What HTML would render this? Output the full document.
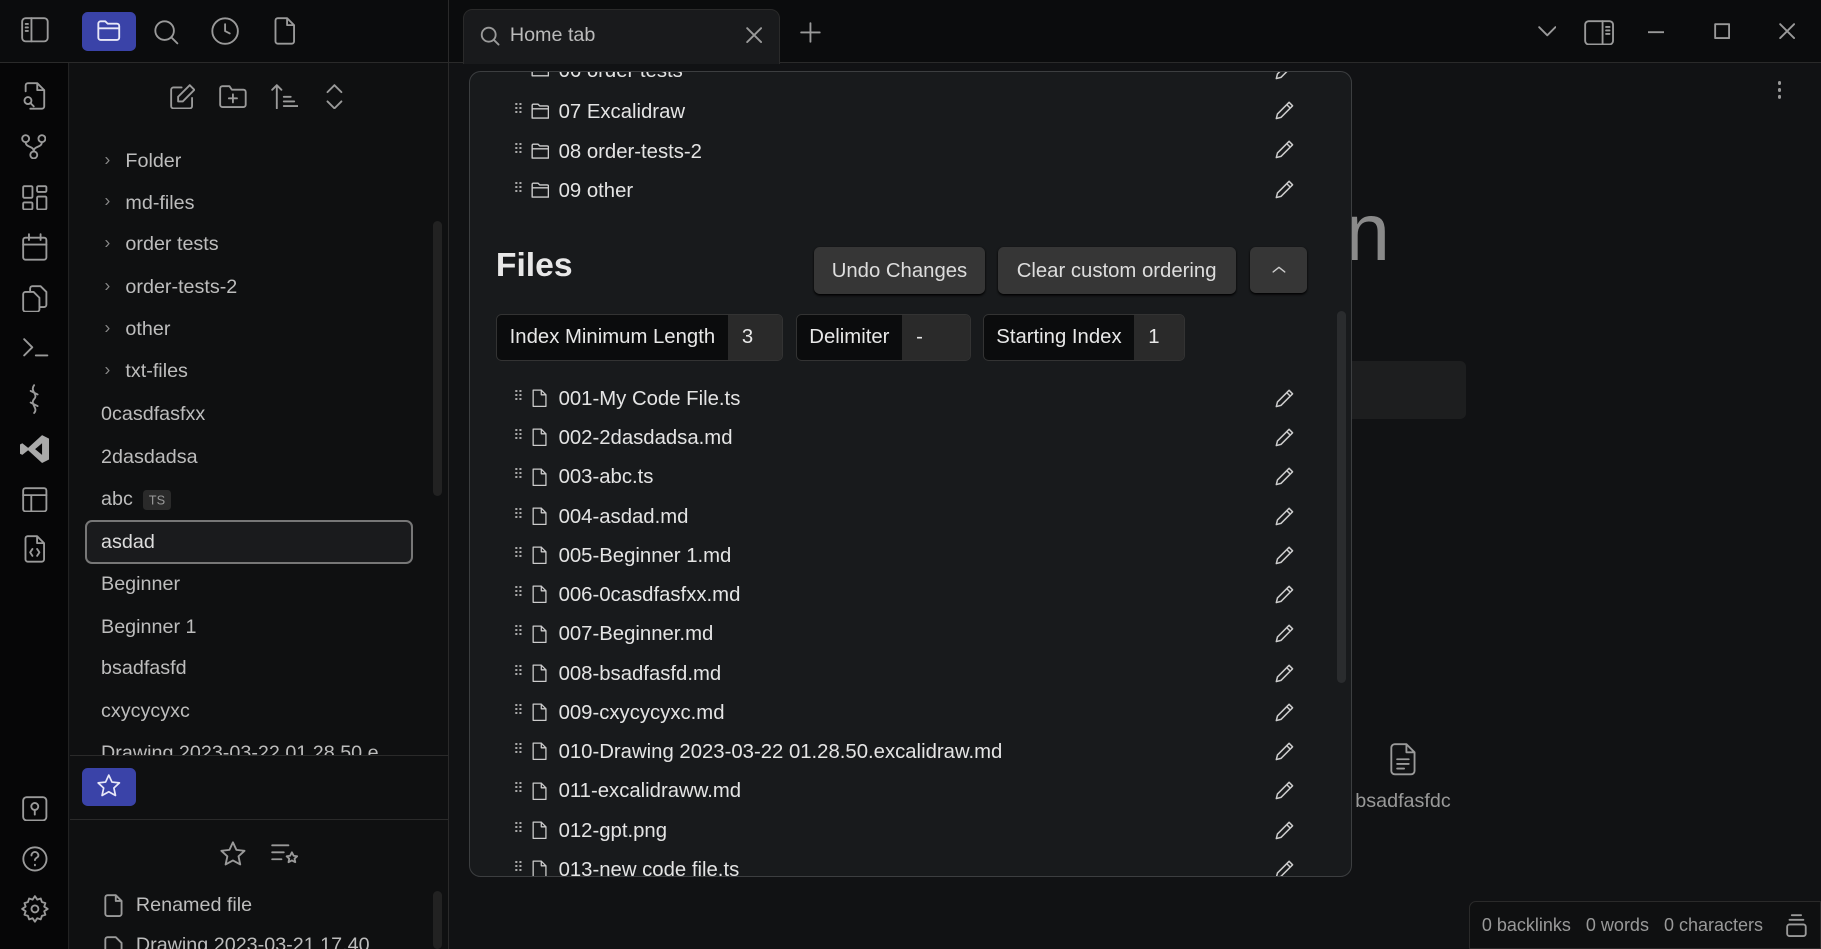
<!DOCTYPE html>
<html><head><meta charset="utf-8"><style>
*{box-sizing:border-box;margin:0;padding:0}
html,body{width:1821px;height:949px;overflow:hidden;background:#111214}
#w{zoom:1.16135;width:1568px;height:817px;position:relative;font-family:"Liberation Sans",sans-serif;color:#ddd;overflow:hidden}
.abs{position:absolute}
svg{fill:none;stroke:#9a9a9a;stroke-width:1.6;stroke-linecap:round;stroke-linejoin:round}
.tree div{position:absolute;left:87px;font-size:17px;color:#bdbdbd}
.tree .f{left:108px}
.chev{position:absolute;left:90px;color:#888;font-size:15px}
.row{position:absolute;left:440px;width:680px;height:34px;font-size:17.5px;color:#e4e4e4}
.row .dots{position:absolute;left:2px;top:0;font-size:12px;color:#aaa;letter-spacing:-1px}
.row .t{position:absolute;left:41px;top:0}
.row svg{position:absolute}
.btn{position:absolute;background:#363636;border-radius:5px;color:#ddd;font-size:17.5px;text-align:center;box-shadow:0 1px 2px #000}
.inp{position:absolute;top:270px;height:41px;border:1px solid #333;border-radius:5px;overflow:hidden;display:flex;font-size:17.5px}
.inp span{display:block;padding:10px 11px 0;background:#0b0c0d;color:#e8e8e8}
.inp b{font-weight:normal;display:block;padding:10px 12px 0;background:#2a2a2a;flex:1;color:#e8e8e8}
</style></head><body><div id="w">
<div class="abs" style="left:0;top:0;width:1568px;height:54px;background:#0b0c0d;border-bottom:1px solid #2a2a2a"></div>
<div class="abs" style="left:386px;top:0;width:1px;height:817px;background:#2a2a2a"></div>
<div class="abs" style="left:0;top:54px;width:59px;height:763px;background:#060607;border-right:1px solid #222"></div>
<div class="abs" style="left:60px;top:54px;width:326px;height:763px;background:#0f1011"></div>
<svg class="abs" style="left:18px;top:15px" width="24" height="22" viewBox="0 0 24 22"><rect x="1" y="1" width="22" height="20" rx="3"/><path d="M9 1v20M4 6h2M4 9h2M4 12h2"/></svg>
<div class="abs" style="left:71px;top:10px;width:46px;height:34px;background:#3a43a8;border-radius:5px"></div>
<svg class="abs" style="left:83px;top:16px" width="22" height="20" viewBox="0 0 22 20"><path d="M2 4a2 2 0 012-2h4l2 2h8a2 2 0 012 2v10a2 2 0 01-2 2H4a2 2 0 01-2-2z M2 8h18" stroke="#e8e8f8"/></svg>
<svg class="abs" style="left:132px;top:16px" width="24" height="24" viewBox="0 0 24 24"><circle cx="10" cy="10" r="8"/><path d="M16 16l5 5"/></svg>
<svg class="abs" style="left:181px;top:14px" width="26" height="26" viewBox="0 0 26 26"><circle cx="13" cy="13" r="11"/><path d="M13 7v6l4 2"/></svg>
<svg class="abs" style="left:234px;top:15px" width="22" height="24" viewBox="0 0 22 24"><path d="M3 3a2 2 0 012-2h8l6 6v14a2 2 0 01-2 2H5a2 2 0 01-2-2zM13 1v6h6"/></svg>
<div class="abs" style="left:399px;top:8px;width:273px;height:47px;background:#191a1c;border:1px solid #2a2a2a;border-bottom:none;border-radius:8px 8px 0 0"></div>
<svg class="abs" style="left:413px;top:22px" width="18" height="18" viewBox="0 0 18 18"><circle cx="7.5" cy="7.5" r="6"/><path d="M12 12l4 4"/></svg>
<div class="abs" style="left:439px;top:21px;font-size:17px;color:#bbb">Home tab</div>
<svg class="abs" style="left:642px;top:23px" width="14" height="14" viewBox="0 0 14 14"><path d="M1 1l12 12M13 1L1 13"/></svg>
<svg class="abs" style="left:689px;top:19px" width="18" height="18" viewBox="0 0 18 18"><path d="M9 1v16M1 9h16"/></svg>
<svg class="abs" style="left:1324px;top:22px" width="16" height="10" viewBox="0 0 16 10"><path d="M1 1l7 7 7-7"/></svg>
<svg class="abs" style="left:1364px;top:17px" width="26" height="22" viewBox="0 0 26 22"><rect x="1" y="1" width="24" height="20" rx="3"/><path d="M16 1v20M19 6h3M19 9h3M19 12h3"/></svg>
<svg class="abs" style="left:1419px;top:27px" width="14" height="2" viewBox="0 0 14 2"><path d="M0 1h14"/></svg>
<svg class="abs" style="left:1476px;top:20px" width="14" height="14" viewBox="0 0 14 14"><rect x="1" y="1" width="12" height="12"/></svg>
<svg class="abs" style="left:1532px;top:20px" width="14" height="14" viewBox="0 0 14 14"><path d="M1 1l12 12M13 1L1 13"/></svg>
<svg class="abs" style="left:18px;top:71px" width="22" height="24" viewBox="0 0 22 24"><path d="M4 8V3a2 2 0 012-2h8l6 6v14a2 2 0 01-2 2H8M14 1v6h6"/><circle cx="6" cy="16" r="3"/><path d="M8 18l3 3"/></svg>
<svg class="abs" style="left:18px;top:115px" width="22" height="22" viewBox="0 0 22 22"><circle cx="4" cy="4" r="3"/><circle cx="18" cy="4" r="3"/><circle cx="11" cy="18" r="3"/><path d="M4 7c0 5 7 3 7 8M18 7c0 5-7 3-7 8"/></svg>
<svg class="abs" style="left:19px;top:159px" width="22" height="22" viewBox="0 0 22 22"><rect x="1" y="1" width="8" height="10" rx="1"/><rect x="13" y="1" width="8" height="5" rx="1"/><rect x="13" y="10" width="8" height="11" rx="1"/><rect x="1" y="15" width="8" height="6" rx="1"/></svg>
<svg class="abs" style="left:19px;top:201px" width="22" height="24" viewBox="0 0 22 24"><rect x="1" y="4" width="20" height="19" rx="2"/><path d="M1 10h20M6 1v5M16 1v5"/></svg>
<svg class="abs" style="left:19px;top:245px" width="22" height="24" viewBox="0 0 22 24"><path d="M7 5V3a2 2 0 012-2h7l5 5v11a2 2 0 01-2 2h-3M1 8a2 2 0 012-2h7l5 5v10a2 2 0 01-2 2H3a2 2 0 01-2-2z"/></svg>
<svg class="abs" style="left:20px;top:291px" width="22" height="16" viewBox="0 0 22 16"><path d="M1 1l7 7-7 7M11 15h10"/></svg>
<svg class="abs" style="left:22px;top:331px" width="14" height="26" viewBox="0 0 14 26"><path d="M7 1c-4 5 4 8 0 12s4 8 0 12M4 6l6 3M4 16l6 3"/></svg>
<svg class="abs" style="left:17px;top:374px" width="26" height="26" viewBox="0 0 26 26"><path d="M19 1l6 3v18l-6 3-12-11-5 4-2-1v-8l2-1 5 4zM19 8l-6 5 6 5z" fill="#aaa" stroke="none"/></svg>
<svg class="abs" style="left:19px;top:419px" width="22" height="22" viewBox="0 0 22 22"><rect x="1" y="1" width="20" height="20" rx="2"/><path d="M1 7h20M8 7v14"/></svg>
<svg class="abs" style="left:19px;top:461px" width="22" height="24" viewBox="0 0 22 24"><path d="M3 3a2 2 0 012-2h8l6 6v14a2 2 0 01-2 2H5a2 2 0 01-2-2zM13 1v6h6M9 12l-2 3 2 3M13 12l2 3-2 3"/></svg>
<svg class="abs" style="left:19px;top:685px" width="22" height="22" viewBox="0 0 22 22"><rect x="1" y="1" width="20" height="20" rx="3"/><circle cx="11" cy="9" r="3"/><path d="M11 12v4"/></svg>
<svg class="abs" style="left:18px;top:728px" width="24" height="24" viewBox="0 0 24 24"><circle cx="12" cy="12" r="10"/><path d="M9 9a3 3 0 116 0c0 2-3 2-3 4M12 17v.5"/></svg>
<svg class="abs" style="left:18px;top:771px" width="24" height="24" viewBox="0 0 24 24"><circle cx="12" cy="12" r="3"/><path d="M12 1l2 3 3-1 1 3 3 1-1 3 3 2-3 2 1 3-3 1-1 3-3-1-2 3-2-3-3 1-1-3-3-1 1-3-3-2 3-2-1-3 3-1 1-3 3 1z"/></svg>
<svg class="abs" style="left:146px;top:72px" width="22" height="22" viewBox="0 0 22 22"><path d="M10 3H3a2 2 0 00-2 2v14a2 2 0 002 2h14a2 2 0 002-2v-7M17 1l4 4-10 10H7v-4z"/></svg>
<svg class="abs" style="left:189px;top:73px" width="24" height="20" viewBox="0 0 24 20"><path d="M1 3a2 2 0 012-2h6l2 3h10a2 2 0 012 2v11a2 2 0 01-2 2H3a2 2 0 01-2-2zM12 8v7M8.5 11.5h7"/></svg>
<svg class="abs" style="left:233px;top:72px" width="24" height="22" viewBox="0 0 24 22"><path d="M5 21V1M1 5l4-4 4 4M11 11h6M11 15h9M11 19h12"/></svg>
<svg class="abs" style="left:279px;top:72px" width="18" height="22" viewBox="0 0 18 22"><path d="M3 7l6-6 6 6M3 15l6 6 6-6"/></svg>
<div class="tree">
<span class="chev" style="top:128px">›</span><div class="f" style="top:129px">Folder</div>
<span class="chev" style="top:164px">›</span><div class="f" style="top:165px">md-files</div>
<span class="chev" style="top:200px">›</span><div class="f" style="top:201px">order tests</div>
<span class="chev" style="top:237px">›</span><div class="f" style="top:238px">order-tests-2</div>
<span class="chev" style="top:273px">›</span><div class="f" style="top:274px">other</div>
<span class="chev" style="top:309px">›</span><div class="f" style="top:310px">txt-files</div>
<div style="top:347px">0casdfasfxx</div>
<div style="top:384px">2dasdadsa</div>
<div style="top:420px">abc <span style="font-size:11px;background:#2a2a2a;color:#999;padding:2px 5px;border-radius:3px;margin-left:4px">TS</span></div>
<div style="top:448px;left:73px;width:283px;height:38px;border:2px solid #777;border-radius:6px;background:#1a1b1d"></div>
<div style="top:457px;color:#ddd">asdad</div>
<div style="top:493px">Beginner</div>
<div style="top:530px">Beginner 1</div>
<div style="top:566px">bsadfasfd</div>
<div style="top:603px">cxycycyxc</div>
<div style="top:639px;height:12px;overflow:hidden">Drawing 2023-03-22 01.28.50.e</div>
</div>
<div class="abs" style="left:373px;top:190px;width:8px;height:237px;background:#222;border-radius:4px"></div>
<div class="abs" style="left:60px;top:650px;width:326px;height:1px;background:#2a2a2a"></div>
<div class="abs" style="left:71px;top:661px;width:46px;height:33px;background:#3a43a8;border-radius:5px"></div>
<svg class="abs" style="left:83px;top:666px" width="22" height="22" viewBox="0 0 24 24"><path d="M12 2l3 6.5 7 .8-5.2 4.8 1.5 7L12 17.6 5.7 21.1l1.5-7L2 9.3l7-.8z" stroke="#e8e8f8"/></svg>
<div class="abs" style="left:60px;top:705px;width:326px;height:1px;background:#2a2a2a"></div>
<svg class="abs" style="left:189px;top:723px" width="24" height="24" viewBox="0 0 24 24"><path d="M12 2l3 6.5 7 .8-5.2 4.8 1.5 7L12 17.6 5.7 21.1l1.5-7L2 9.3l7-.8z"/></svg>
<svg class="abs" style="left:233px;top:726px" width="24" height="18" viewBox="0 0 24 18"><path d="M1 2h14M1 8h10M1 14h8M18 8l1.5 3 3 .5-2.2 2 .6 3L18 15l-2.9 1.5.6-3-2.2-2 3-.5z"/></svg>
<svg class="abs" style="left:89px;top:770px" width="18" height="20" viewBox="0 0 18 20"><path d="M2 3a2 2 0 012-2h7l5 5v11a2 2 0 01-2 2H4a2 2 0 01-2-2zM11 1v5h5"/></svg>
<div class="abs" style="left:117px;top:770px;font-size:17px;color:#bdbdbd">Renamed file</div>
<svg class="abs" style="left:89px;top:806px" width="18" height="20" viewBox="0 0 18 20"><path d="M2 3a2 2 0 012-2h7l5 5v11a2 2 0 01-2 2H4a2 2 0 01-2-2z"/></svg>
<div class="abs" style="left:117px;top:804px;font-size:17px;color:#bdbdbd">Drawing 2023-03-21 17.40</div>
<div class="abs" style="left:373px;top:767px;width:8px;height:50px;background:#222;border-radius:4px"></div>
<div class="abs" style="left:1158px;top:160px;font-size:70px;color:#8a8a8a">n</div>
<div class="abs" style="left:1150px;top:311px;width:112px;height:50px;background:#1d1e1f;border-radius:5px"></div>
<svg class="abs" style="left:1196px;top:640px" width="24" height="28" viewBox="0 0 24 28"><path d="M2 4a3 3 0 013-3h10l7 7v16a3 3 0 01-3 3H5a3 3 0 01-3-3zM15 1v7h7M7 14h10M7 18h10M7 22h6"/></svg>
<div class="abs" style="left:1167px;top:680px;font-size:17px;color:#999">bsadfasfdc</div>
<div class="abs" style="left:1531px;top:70px;width:3px;height:3px;border-radius:50%;background:#999;box-shadow:0 6px #999,0 12px #999"></div>
<div class="abs" style="left:1265px;top:776px;width:303px;height:41px;background:#0f1011;border:1px solid #2a2a2a;border-radius:6px 0 0 0"></div>
<div class="abs" style="left:1276px;top:788px;font-size:15.5px;color:#999">0 backlinks&nbsp;&nbsp;&nbsp;0 words&nbsp;&nbsp;&nbsp;0 characters</div>
<svg class="abs" style="left:1538px;top:787px" width="18" height="20" viewBox="0 0 18 20"><rect x="1" y="9" width="16" height="10" rx="2"/><path d="M3 5h12M5 1h8"/></svg>
<div class="abs" style="left:404px;top:61px;width:760px;height:694px;background:#181a1c;border:1px solid #3c3e40;border-radius:10px;overflow:hidden">
<div class="abs" style="left:746px;top:206px;width:8px;height:320px;background:#2a2c2e;border-radius:4px"></div>
</div>
<div class="abs" style="left:405px;top:62px;width:758px;height:692px;overflow:hidden">
<div style="position:absolute;left:-405px;top:-62px;width:1568px;height:817px">
<div class="row" style="top:52px"><span class="dots">⠿</span><svg style="left:17px;top:2px" width="16" height="12" viewBox="0 0 16 12"><path d="M1 2a1 1 0 011-1h4l1.5 1.5H14a1 1 0 011 1V11H1zM1 4h14" stroke="#ccc" stroke-width="1.2"/></svg><span class="t">06 order tests</span></div>
<div class="row" style="top:87px"><span class="dots">⠿</span><svg style="left:17px;top:2px" width="16" height="14" viewBox="0 0 16 14"><path d="M1 2a1 1 0 011-1h4l1.5 1.5H14a1 1 0 011 1V13H1zM1 5h14" stroke="#ccc" stroke-width="1.2"/></svg><span class="t">07 Excalidraw</span></div>
<div class="row" style="top:121px"><span class="dots">⠿</span><svg style="left:17px;top:2px" width="16" height="14" viewBox="0 0 16 14"><path d="M1 2a1 1 0 011-1h4l1.5 1.5H14a1 1 0 011 1V13H1zM1 5h14" stroke="#ccc" stroke-width="1.2"/></svg><span class="t">08 order-tests-2</span></div>
<div class="row" style="top:155px"><span class="dots">⠿</span><svg style="left:17px;top:2px" width="16" height="14" viewBox="0 0 16 14"><path d="M1 2a1 1 0 011-1h4l1.5 1.5H14a1 1 0 011 1V13H1zM1 5h14" stroke="#ccc" stroke-width="1.2"/></svg><span class="t">09 other</span></div>
<div class="abs" style="left:427px;top:213px;font-size:29px;font-weight:bold;color:#e8e8e8">Files</div>
<div class="btn" style="left:701px;top:213px;width:147px;height:40px;padding-top:11px">Undo Changes</div>
<div class="btn" style="left:859px;top:213px;width:205px;height:40px;padding-top:11px">Clear custom ordering</div>
<div class="btn" style="left:1076px;top:213px;width:49px;height:39px"><svg style="position:absolute;left:19px;top:15px" width="12" height="8" viewBox="0 0 12 8"><path d="M1 6l5-4 5 4" stroke="#ccc" stroke-width="1.2"/></svg></div>
<div class="inp" style="left:427px;width:247px"><span>Index Minimum Length</span><b>3</b></div>
<div class="inp" style="left:685px;width:151px"><span>Delimiter</span><b>-</b></div>
<div class="inp" style="left:846px;width:174px"><span>Starting Index</span><b>1</b></div>
</div></div>
<div id="files"></div>
<script>
var names=["001-My Code File.ts","002-2dasdadsa.md","003-abc.ts","004-asdad.md","005-Beginner 1.md","006-0casdfasfxx.md","007-Beginner.md","008-bsadfasfd.md","009-cxycycyxc.md","010-Drawing 2023-03-22 01.28.50.excalidraw.md","011-excalidraww.md","012-gpt.png","013-new code file.ts"];
var pen='<svg style="left:657px;top:0" width="18" height="18" viewBox="0 0 18 18"><path d="M13 2l3 3-10 10-4 1 1-4zM11 4l3 3" stroke="#ccc" stroke-width="1.3"/></svg>';
var doc='<svg style="left:18px;top:1px" width="13" height="16" viewBox="0 0 13 16"><path d="M1 1h7l4 4v10H1zM8 1v4h4" stroke="#ccc" stroke-width="1.1"/></svg>';
var h='<div class="abs" style="left:405px;top:62px;width:758px;height:692px;overflow:hidden"><div style="position:absolute;left:-405px;top:-62px;width:1568px;height:817px">';
names.forEach(function(n,i){h+='<div class="row" style="top:'+(334+i*33.8)+'px"><span class="dots">⠿</span>'+doc+'<span class="t">'+n+'</span>'+pen+'</div>';});
[52,86,120,154].forEach(function(t){h+='<div class="row" style="top:'+t+'px">'+pen+'</div>';});
h+='</div></div>';
document.getElementById('files').innerHTML=h;
</script>
</div></body></html>
